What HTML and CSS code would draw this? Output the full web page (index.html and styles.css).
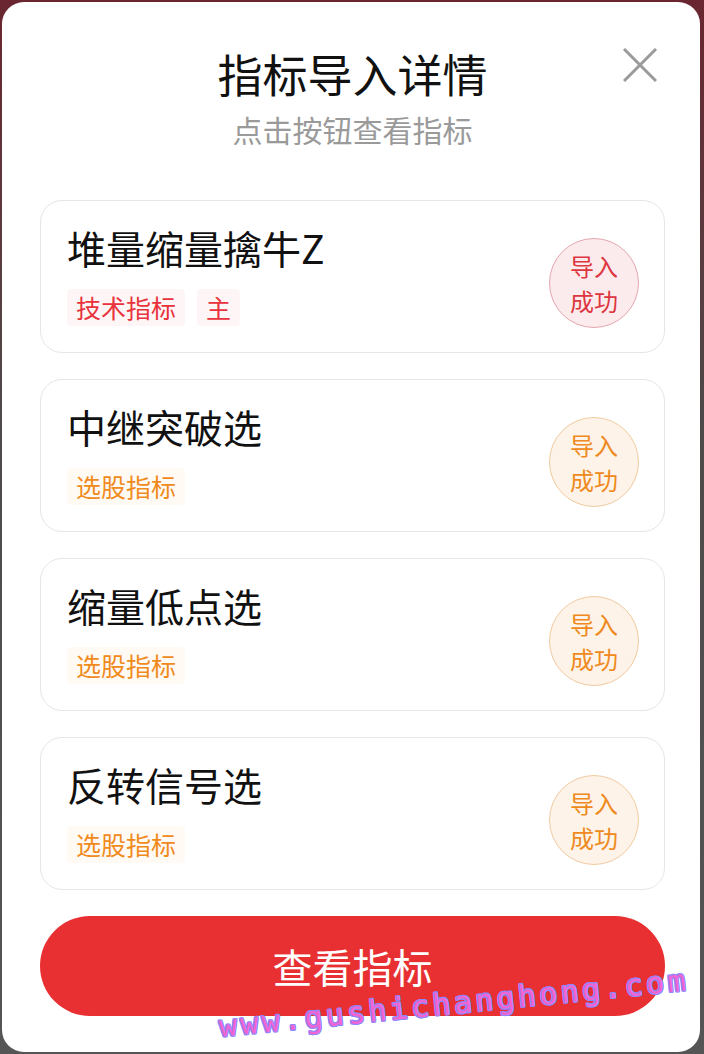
FILE: index.html
```html
<!DOCTYPE html>
<html lang="zh-CN">
<head>
    <meta charset="UTF-8">
    <meta name="viewport" content="width=device-width, initial-scale=1.0">
    <title>指标导入详情</title>
    <link rel="stylesheet" href="styles.css">
</head>
<body>
    <div class="modal">
        <button class="close" aria-label="关闭">
            <svg viewBox="0 0 34 34" width="34" height="34">
                <path d="M1 1 L33 33 M33 1 L1 33" stroke="#9a9a9a" stroke-width="3" fill="none"/>
            </svg>
        </button>
        <h1 class="title">指标导入详情</h1>
        <div class="subtitle">点击按钮查看指标</div>

        <div class="list">
            <div class="card">
                <div class="info">
                    <div class="name">堆量缩量擒牛Z</div>
                    <div class="tags">
                        <span class="tag red">技术指标</span>
                        <span class="tag red">主</span>
                    </div>
                </div>
                <div class="badge red">导入<br>成功</div>
            </div>
            <div class="card">
                <div class="info">
                    <div class="name">中继突破选</div>
                    <div class="tags">
                        <span class="tag orange">选股指标</span>
                    </div>
                </div>
                <div class="badge orange">导入<br>成功</div>
            </div>
            <div class="card">
                <div class="info">
                    <div class="name">缩量低点选</div>
                    <div class="tags">
                        <span class="tag orange">选股指标</span>
                    </div>
                </div>
                <div class="badge orange">导入<br>成功</div>
            </div>
            <div class="card">
                <div class="info">
                    <div class="name">反转信号选</div>
                    <div class="tags">
                        <span class="tag orange">选股指标</span>
                    </div>
                </div>
                <div class="badge orange">导入<br>成功</div>
            </div>
        </div>

        <button class="view-btn">查看指标</button>
    </div>

    <div class="watermark">www.gushichanghong.com</div>
</body>
</html>
```

FILE: styles.css
```css
body {
    margin: 0;
    background: linear-gradient(#6a2630, #4e4a4a 40%, #555);
    font-family: "Noto Sans CJK SC", "Noto Sans", sans-serif;
    position: relative;
    height: 1054px;
    overflow: hidden;
}
.modal {
    position: relative;
    margin: 2px 4px 0 2px;
    height: 1050px;
    box-sizing: border-box;
    background: #fff;
    border-radius: 22px;
    padding: 45px 35px 0 38px;
}
.close {
    position: absolute;
    top: 46px;
    right: 43px;
    width: 34px;
    height: 34px;
    padding: 0;
    border: none;
    background: none;
}
.close svg {
    display: block;
}
.title {
    margin: 0;
    text-align: center;
    font-size: 45px;
    line-height: 54px;
    font-weight: 400;
    color: #111;
}
.subtitle {
    margin-top: 10px;
    text-align: center;
    font-size: 30px;
    line-height: 36px;
    color: #9a9a9a;
}
.list {
    margin-top: 53px;
    display: flex;
    flex-direction: column;
    gap: 26px;
}
.card {
    display: flex;
    align-items: center;
    justify-content: space-between;
    border: 1px solid #e6e6e6;
    border-radius: 22px;
    padding: 24px 25px 26px 26px;
}
.name {
    font-size: 39px;
    line-height: 44px;
    color: #111;
}
.tags {
    display: flex;
    gap: 12px;
    margin-top: 20px;
}
.tag {
    font-size: 25px;
    line-height: 37px;
    padding: 0 9px;
    border-radius: 4px;
}
.tag.red {
    color: #e8323c;
    background: #fef6f6;
}
.tag.orange {
    color: #f08a1c;
    background: #fffaf3;
}
.badge {
    width: 90px;
    height: 90px;
    box-sizing: border-box;
    border-radius: 50%;
    display: flex;
    align-items: center;
    justify-content: center;
    text-align: center;
    font-size: 24px;
    line-height: 35px;
    margin-top: 7px;
    margin-bottom: -7px;
}
.badge.red {
    color: #dc3640;
    background: #fcebed;
    border: 1px solid #e3a7ae;
}
.badge.orange {
    color: #ef8a20;
    background: #fdf3e8;
    border: 1px solid #f1caa0;
}
.view-btn {
    display: block;
    width: 100%;
    height: 100px;
    margin-top: 26px;
    border: none;
    border-radius: 50px;
    background: #e83032;
    color: #fff;
    font-family: "Noto Sans CJK SC", sans-serif;
    font-size: 40px;
}
.watermark {
    position: absolute;
    left: 220px;
    top: 1012px;
    transform-origin: 0 25px;
    transform: rotate(-5.7deg);
    font-family: "DejaVu Sans Mono", monospace;
    font-size: 30px;
    line-height: 30px;
    letter-spacing: 3.4px;
    white-space: nowrap;
    color: #f264d2;
    text-shadow: 1px 0 #8c88ff, -1px 0 #8c88ff, 0 1px #8c88ff, 0 -1px #8c88ff,
        1px 1px #8c88ff, -1px -1px #8c88ff, 1px -1px #8c88ff, -1px 1px #8c88ff;
    pointer-events: none;
}
```
